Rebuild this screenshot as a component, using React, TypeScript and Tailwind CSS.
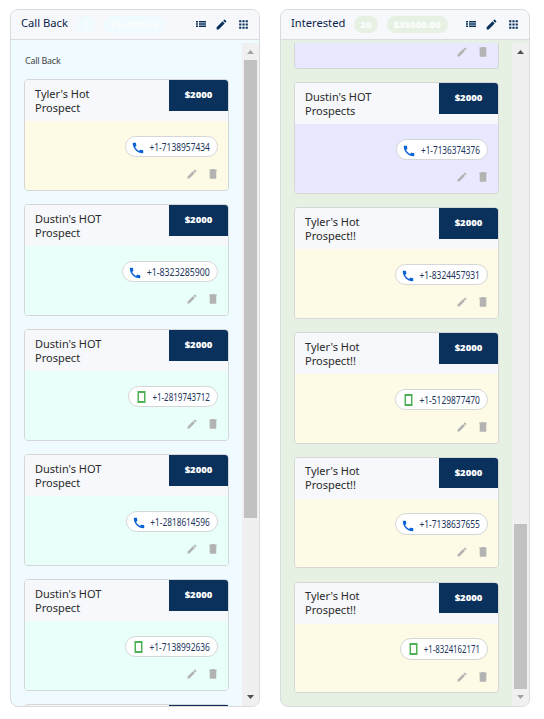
import { MdApps, MdCall, MdEdit } from "react-icons/md"

type Kind = "call" | "mobile"

interface Prospect {
  name: string
  phone: string
  kind: Kind
  color: string
  pill: string
  squeeze: string
  compact?: boolean
}

const CALL_BACK: Prospect[] = [
  { name: "Tyler's Hot Prospect", phone: "+1-7138957434", kind: "call", color: "bg-[#fdfbe5]", pill: "w-[93px]", squeeze: "scale-x-[0.84]" },
  { name: "Dustin's HOT Prospect", phone: "+1-8323285900", kind: "call", color: "bg-[#e8fffa]", pill: "w-[96px]", squeeze: "scale-x-[0.88]" },
  { name: "Dustin's HOT Prospect", phone: "+1-2819743712", kind: "mobile", color: "bg-[#e8fffa]", pill: "w-[90px]", squeeze: "scale-x-[0.80]" },
  { name: "Dustin's HOT Prospect", phone: "+1-2818614596", kind: "call", color: "bg-[#e8fffa]", pill: "w-[92px]", squeeze: "scale-x-[0.83]" },
  { name: "Dustin's HOT Prospect", phone: "+1-7138992636", kind: "mobile", color: "bg-[#e8fffa]", pill: "w-[93px]", squeeze: "scale-x-[0.84]" },
]

const INTERESTED: Prospect[] = [
  { name: "Dustin's HOT Prospects", phone: "+1-7136374376", kind: "call", color: "bg-[#e8e8ff]", pill: "w-[92px]", squeeze: "scale-x-[0.82]" },
  { name: "Tyler's Hot Prospect!!", phone: "+1-8324457931", kind: "call", color: "bg-[#fdfbe5]", pill: "w-[93px]", squeeze: "scale-x-[0.84]" },
  { name: "Tyler's Hot Prospect!!", phone: "+1-5129877470", kind: "mobile", color: "bg-[#fdfbe5]", pill: "w-[93px]", squeeze: "scale-x-[0.84]" },
  { name: "Tyler's Hot Prospect!!", phone: "+1-7138637655", kind: "call", color: "bg-[#fdfbe5]", pill: "w-[93px]", squeeze: "scale-x-[0.84]", compact: true },
  { name: "Tyler's Hot Prospect!!", phone: "+1-8324162171", kind: "mobile", color: "bg-[#fdfbe5]", pill: "w-[88px]", squeeze: "scale-x-[0.78]", compact: true },
]

function ListIcon() {
  return (
    <svg className="h-[6px] w-[10px]" viewBox="0 0 10 6" fill="currentColor">
      <path d="M0 0h2v1.6H0zM3 0h7v1.6H3zM0 2.2h2v1.6H0zM3 2.2h7v1.6H3zM0 4.4h2V6H0zM3 4.4h7V6H3z" />
    </svg>
  )
}

function MobileIcon() {
  return (
    <svg className="mr-[2px] ml-[8px] h-[12px] w-[9px] shrink-0" viewBox="0 0 9 12">
      <path d="M.5 0h8v12h-8zM2 2v8h5V2z" fill="#4fb055" fillRule="evenodd" />
    </svg>
  )
}

function TrashIcon() {
  return (
    <svg className="h-[10px] w-[8px]" viewBox="0 0 8 10" fill="currentColor">
      <path d="M2.6 0h2.8l.5.6h1.8v1.2H7.3V9q0 .8-.8.8h-5Q.7 9.800.7 9V1.800H.3V.6h1.800z" />
    </svg>
  )
}

function CardActions() {
  return (
    <div className="flex h-3 items-center justify-end gap-[11px] pr-[11px] text-[#b3b3b3]">
      <MdEdit className="size-3" />
      <TrashIcon />
    </div>
  )
}

function ProspectCard({ prospect }: { prospect: Prospect }) {
  const { compact } = prospect
  return (
    <div className={`flex shrink-0 flex-col overflow-hidden rounded-[4px] border border-[#d6d6d6] ${compact ? "mb-[14px] h-[111px]" : "mb-[13px] h-[112px]"}`}>
      <div className="flex h-[41px] shrink-0 justify-between bg-[#f6f8fb]">
        <p className={`w-[90px] pl-[10px] text-[11px] leading-[14px] text-[#2a2a2a] ${compact ? "pt-[6px]" : "pt-[7px]"}`}>
          {prospect.name}
        </p>
        <div className={`flex w-[59px] items-center justify-center bg-[#0a305c] font-['Open_Sans',sans-serif] text-[9.5px] font-extrabold text-white ${compact ? "h-[30px]" : "h-[31px]"}`}>
          $2000
        </div>
      </div>
      <div className={`flex-1 ${prospect.color}`}>
        <div className={`flex justify-end pr-[10px] ${compact ? "pt-[14px]" : "pt-[15px]"}`}>
          <div className={`flex items-center rounded-full border border-[#d6d6d6] bg-white pr-[7px] ${compact ? "h-[22px]" : "h-[21px]"} ${prospect.pill}`}>
            {prospect.kind === "call" ? (
              <MdCall className="mt-[3px] ml-[5px] size-[14px] shrink-0 text-[#0b63d8]" />
            ) : (
              <MobileIcon />
            )}
            <div className="flex min-w-0 flex-1 justify-end pt-px">
              <span className={`origin-right text-[10px] whitespace-nowrap text-[#22355c] ${prospect.squeeze}`}>{prospect.phone}</span>
            </div>
          </div>
        </div>
        <div className="pt-[11px]">
          <CardActions />
        </div>
      </div>
    </div>
  )
}

interface HeaderProps {
  title: string
  count: string
  total: string
  badge: string
}

function ColumnHeader({ title, count, total, badge }: HeaderProps) {
  return (
    <div className="flex h-[30px] shrink-0 items-center border-b border-[#d9dbdd] bg-[#f6f8fb] pr-[9px] pb-px pl-[10px]">
      <h2 className="pb-px text-[11.2px] whitespace-nowrap text-[#0a2347]">{title}</h2>
      <span className={`ml-[9px] rounded-full px-[6px] font-['Open_Sans',sans-serif] text-[9.5px] leading-[17px] font-extrabold text-[#fbfdfc] ${badge}`}>{count}</span>
      <span className={`ml-[9px] rounded-full px-[7px] font-['Open_Sans',sans-serif] text-[9.5px] leading-[17px] font-extrabold text-[#fbfdfc] ${badge}`}>{total}</span>
      <div className="ml-auto flex items-center gap-[9px] text-[#0a305c]">
        <ListIcon />
        <MdEdit className="size-[13px]" />
        <MdApps className="size-[13px]" />
      </div>
    </div>
  )
}

interface ScrollbarProps {
  before: string
  thumb: string
  up: string
  down: string
}

function Scrollbar({ before, thumb, up, down }: ScrollbarProps) {
  return (
    <div className="flex w-[17px] shrink-0 flex-col items-center bg-[#f0f0f0]">
      <svg className={`h-[17px] w-[17px] shrink-0 ${up}`} viewBox="0 0 17 17">
        <path d="M5 11h7L8.5 7z" fill="currentColor" />
      </svg>
      <div className={`shrink-0 ${before}`} />
      <div className={`w-[13px] shrink-0 bg-[#c1c1c1] ${thumb}`} />
      <svg className={`mt-auto h-[17px] w-[17px] shrink-0 ${down}`} viewBox="0 0 17 17">
        <path d="M5 6h7l-3.5 4z" fill="currentColor" />
      </svg>
    </div>
  )
}

export default function App() {
  return (
    <div className="flex h-[719px] w-[544px] gap-5 overflow-hidden bg-white pt-[9px] pl-[10px] font-['Noto_Sans',sans-serif]">
      <section className="flex h-[698px] w-[250px] flex-col overflow-hidden rounded-[8px] border border-[#d9dbdd] bg-[#effbff]">
        <ColumnHeader title="Call Back" count="7" total="$14000.00" badge="bg-[#effbff]" />
        <div className="mt-[3px] flex min-h-0 flex-1">
          <div className="flex flex-1 flex-col overflow-hidden pr-[13px] pl-[13px]">
            <p className="h-[36px] shrink-0 pt-[11px] pl-px text-[9px] leading-[14px] tracking-[-0.25px] text-[#444]">Call Back</p>
            {CALL_BACK.map((prospect) => (
              <ProspectCard key={prospect.phone} prospect={prospect} />
            ))}
            <div className="flex h-[112px] shrink-0 justify-end rounded-[4px] border border-[#d6d6d6] bg-[#f6f8fb]">
              <div className="h-[31px] w-[59px] bg-[#0a305c]" />
            </div>
          </div>
          <Scrollbar before="h-0" thumb="h-[458px]" up="text-[#a3a3a3]" down="text-[#505050]" />
        </div>
      </section>

      <section className="flex h-[698px] w-[250px] flex-col overflow-hidden rounded-[8px] border border-[#d9dbdd] bg-[#e6f1e4]">
        <ColumnHeader title="Interested" count="20" total="$38000.00" badge="bg-[#e6f1e4]" />
        <div className="mt-[3px] flex min-h-0 flex-1">
          <div className="flex flex-1 flex-col overflow-hidden pr-[13px] pl-[13px]">
            <div className="mb-[13px] h-[26px] shrink-0 rounded-b-[4px] border border-t-0 border-[#d6d6d6] bg-[#e8e8ff] pt-[3px]">
              <CardActions />
            </div>
            {INTERESTED.map((prospect) => (
              <ProspectCard key={prospect.phone} prospect={prospect} />
            ))}
          </div>
          <Scrollbar before="h-[464px]" thumb="h-[165px]" up="text-[#505050]" down="text-[#a3a3a3]" />
        </div>
      </section>
    </div>
  )
}
